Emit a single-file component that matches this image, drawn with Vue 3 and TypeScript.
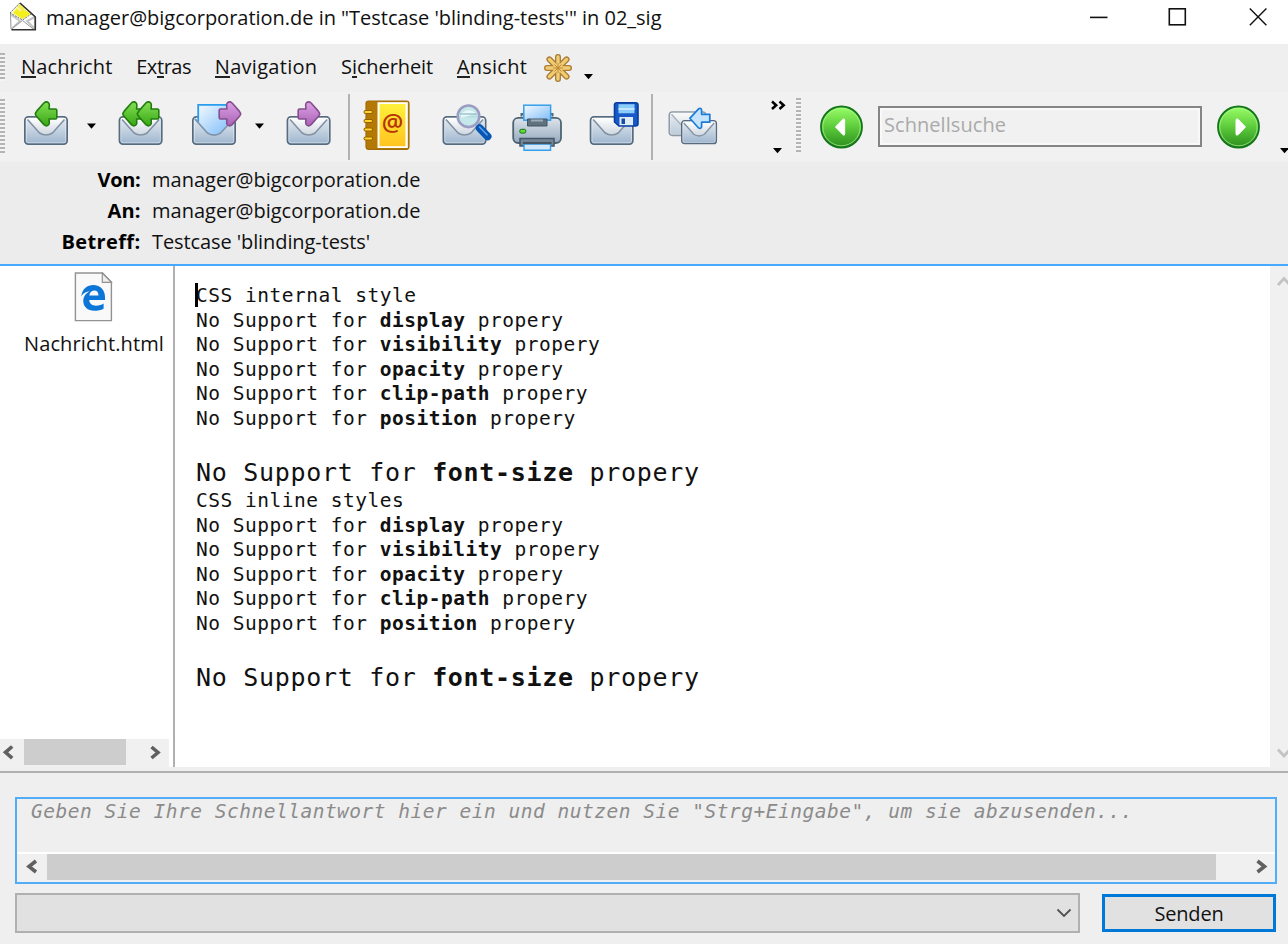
<script setup lang="ts">
import type { Directive } from 'vue'

interface MenuEntry { pre: string; key: string; post: string; width: number }
interface HeaderRow { label: string; labelWidth: number; value: string; width: number }
interface MessageLine { text: string; bold?: string; large?: boolean }

// Spreads or tightens a label so it takes exactly the given width.
const vFit: Directive<HTMLElement, number> = {
  mounted(el, binding) {
    const count = (el.textContent ?? '').length
    const natural = el.getBoundingClientRect().width
    if (count > 0) el.style.letterSpacing = `${(binding.value - natural) / count}px`
  },
}

const menu: MenuEntry[] = [
  { pre: '', key: 'N', post: 'achricht', width: 91.5 },
  { pre: 'Ex', key: 't', post: 'ras', width: 55 },
  { pre: '', key: 'N', post: 'avigation', width: 102.5 },
  { pre: 'S', key: 'i', post: 'cherheit', width: 92 },
  { pre: '', key: 'A', post: 'nsicht', width: 70.5 },
]

const headers: HeaderRow[] = [
  { label: 'Von:', labelWidth: 43, value: 'manager@bigcorporation.de', width: 268.5 },
  { label: 'An:', labelWidth: 33, value: 'manager@bigcorporation.de', width: 268.5 },
  { label: 'Betreff:', labelWidth: 79, value: "Testcase 'blinding-tests'", width: 218 },
]

const properties = ['display', 'visibility', 'opacity', 'clip-path', 'position']
const block = (title: string): MessageLine[] => [
  { text: title },
  ...properties.map((bold) => ({ text: 'No Support for ', bold })),
  { text: '\u00a0' },
  { text: 'No Support for ', bold: 'font-size', large: true },
]
const lines: MessageLine[] = [...block('CSS internal style'), ...block('CSS inline styles')]
</script>

<template>
  <div class="window">
    <svg class="defs" width="0" height="0" aria-hidden="true">
      <defs>
        <linearGradient id="gBody" x1="0" y1="0" x2="0" y2="1">
          <stop offset="0" stop-color="#e9edf2" /><stop offset="1" stop-color="#9db5ce" />
        </linearGradient>
        <linearGradient id="gFlap" x1="0" y1="0" x2="0" y2="1">
          <stop offset="0" stop-color="#fff" /><stop offset="1" stop-color="#ccd5de" />
        </linearGradient>
        <linearGradient id="gGreen" x1="0" y1="0" x2="0" y2="1">
          <stop offset="0" stop-color="#83e055" /><stop offset="1" stop-color="#38a714" />
        </linearGradient>
        <linearGradient id="gPurple" x1="0" y1="0" x2="0" y2="1">
          <stop offset="0" stop-color="#dda1e6" /><stop offset="1" stop-color="#a863b4" />
        </linearGradient>
        <linearGradient id="gBlue" x1="0" y1="0" x2="1" y2="1">
          <stop offset="0" stop-color="#f4faff" /><stop offset="1" stop-color="#7dbcf8" />
        </linearGradient>
        <linearGradient id="gOrb" x1="0" y1="0" x2="0" y2="1">
          <stop offset="0" stop-color="#9bff68" /><stop offset=".5" stop-color="#5ccb3b" /><stop offset="1" stop-color="#2b8d1d" />
        </linearGradient>
        <linearGradient id="gYellow" x1="0" y1="0" x2="0" y2="1">
          <stop offset="0" stop-color="#fff03a" /><stop offset="1" stop-color="#ffc420" />
        </linearGradient>
        <linearGradient id="gSilver" x1="0" y1="0" x2="0" y2="1">
          <stop offset="0" stop-color="#dfe5ec" /><stop offset="1" stop-color="#94a9be" />
        </linearGradient>
        <g id="envelope">
          <rect x=".9" y=".9" width="42.2" height="27.2" rx="3.4" fill="url(#gBody)" stroke="#566b7f" stroke-width="1.8" />
          <rect x="2.2" y="2.2" width="39.6" height="24.6" rx="2" fill="none" stroke="#fff" stroke-opacity=".5" stroke-width=".9" />
          <path d="M2 2 L15.5 17.4 Q22 21.5 28.5 17.4 L42 2Z" fill="url(#gFlap)" />
          <path d="M3.5 3.5 L15.5 17 Q22 21 28.5 17 L40.5 3.5" fill="none" stroke="#8191a2" stroke-width="1.6" />
        </g>
        <path id="arrowLeft" d="M.8 12.8 Q1 11.6 2.4 9.9 L9.4 2 Q12 -.3 14.2 2 Q15 3 14.8 4.6 L14.6 8 H21 Q22.3 8 22.3 9.3 V16.6 Q22.3 18 21 18 H14.6 L14.8 21.5 Q14.9 23.2 13.9 24 Q11.8 25.8 9.4 23.6 L2.4 15.8 Q1 14 .8 12.8Z" stroke-linejoin="round" stroke-width="1.6" />
        <path id="caret" d="M0 0H9L4.5 5.2Z" />
      </defs>
    </svg>

    <header class="titlebar">
      <svg class="app-icon" width="30" height="32" viewBox="0 0 30 32">
        <path d="M2.5 13 L13 3.5 L27 15 V28 H3Z" fill="#fff" stroke="#888" stroke-width=".9" />
        <path d="M3.5 14 L12 20 L3.5 28 M27 16 L19 20 L27 28" fill="none" stroke="#c4c4c4" stroke-width="2" />
        <path d="M2 12 L11.5 2.2 L24 12.5 L14.5 19Z" fill="#fbfbd8" stroke="#555" stroke-width=".9" stroke-dasharray="2 1" />
        <path d="M5 12 L9 7 L12 10.5 L15 7.5 L22.5 13 L14.5 18Z" fill="#f6ef1e" />
        <path d="M9 5.5 L12 3 L17 7.5 L13.5 10.5Z" fill="#f4ed5a" />
        <path d="M3 28.5 L14.5 19.5 L26 28.5" fill="#fff" stroke="#999" stroke-width="1" />
        <path d="M12 2 L27.3 16 V28.8 H3.5" fill="none" stroke="#333" stroke-width="1.6" />
      </svg>
      <span v-fit="615.5" class="title">manager@bigcorporation.de in "Testcase 'blinding-tests'" in 02_sig</span>
      <svg class="controls" width="200" height="44" viewBox="1088 0 200 44" fill="none" stroke="#111" stroke-width="1.6">
        <path d="M1090 17.4H1107.5" />
        <rect x="1169.3" y="8.8" width="16" height="16" />
        <path d="M1249.8 8.5L1266.4 25.2M1266.4 8.5L1249.8 25.2" stroke-width="1.4" />
      </svg>
    </header>

    <nav class="menubar">
      <span class="grip menu-grip"></span>
      <a v-for="m in menu" :key="m.key + m.post" v-fit="m.width" class="menu-item">{{ m.pre }}<span class="mnemonic">{{ m.key }}</span>{{ m.post }}</a>
      <svg class="star" width="56" height="36" viewBox="540 50 56 36">
        <g fill="none" stroke-linecap="round">
          <path d="M558 57V79M547 68H569M549.4 59.4L566.6 76.6M566.6 59.4L549.4 76.6" stroke="#ad7c35" stroke-width="6" />
          <path d="M558 57V79M547 68H569M549.4 59.4L566.6 76.6M566.6 59.4L549.4 76.6" stroke="#f0cd75" stroke-width="3.3" />
          <path d="M558 63.5V72.5M553.5 68H562.5M554.8 64.8L561.2 71.2M561.2 64.8L554.8 71.2" stroke="#bd8533" stroke-width="1" />
        </g>
        <use href="#caret" x="584" y="74" />
      </svg>
    </nav>

    <div class="toolbar">
      <span class="grip tool-grip"></span>
      <svg width="95" height="60" viewBox="10 96 95 60">
        <use href="#envelope" x="24" y="116" />
        <use href="#arrowLeft" x="34.5" y="101" fill="url(#gGreen)" stroke="#237c10" />
        <use href="#caret" x="87" y="123.5" />
      </svg>
      <svg width="75" height="60" viewBox="105 96 75 60">
        <use href="#envelope" x="118.6" y="116" />
        <use href="#arrowLeft" x="122" y="101" fill="url(#gGreen)" stroke="#237c10" />
        <use href="#arrowLeft" x="136.5" y="101" fill="url(#gGreen)" stroke="#237c10" />
      </svg>
      <svg width="95" height="60" viewBox="180 96 95 60">
        <use href="#envelope" x="192" y="116" />
        <path d="M198 104.8 H230 V124 L218 134.5 H210 L198 122Z" fill="url(#gBlue)" />
        <path d="M198.2 122 V104.8 H229" fill="none" stroke="#289cef" stroke-width="1.8" />
        <path d="M194.5 118.5 L207 132.5 Q214 137.5 221 132.5 L234 118.5" fill="none" stroke="#7f96ae" stroke-width="1.4" />
        <g transform="translate(241.5 101) scale(-1 1)"><use href="#arrowLeft" fill="url(#gPurple)" stroke="#854e8d" /></g>
        <use href="#caret" x="255" y="123.5" />
      </svg>
      <svg width="73" height="60" viewBox="275 96 73 60">
        <use href="#envelope" x="286.6" y="116" />
        <g transform="translate(320.5 101) scale(-1 1)"><use href="#arrowLeft" fill="url(#gPurple)" stroke="#854e8d" /></g>
      </svg>
      <span class="separator"></span>
      <svg width="75" height="60" viewBox="350 96 75 60">
        <rect x="366" y="101" width="43" height="48.3" rx="2.5" fill="#b47905" stroke="#a06c08" stroke-width="1.2" />
        <rect x="377.5" y="102.2" width="30.3" height="45.8" fill="#fff" />
        <rect x="379.5" y="104" width="26" height="42.2" fill="url(#gYellow)" />
        <g stroke-linecap="round">
          <path d="M365.5 112H371M365.5 121H371M365.5 129.5H371M365.5 138.5H371" stroke="#996200" stroke-width="4" />
          <path d="M365.5 112H371M365.5 121H371M365.5 129.5H371M365.5 138.5H371" stroke="#ffd52c" stroke-width="2" />
        </g>
        <text x="392.6" y="130.5" text-anchor="middle" font-family="Open Sans, sans-serif" font-size="24" font-weight="600" fill="#b53307">@</text>
      </svg>
      <svg width="75" height="60" viewBox="425 96 75 60">
        <use href="#envelope" x="442.5" y="116" />
        <path d="M479.5 128 L487.7 136.5" stroke="#0856b3" stroke-width="7.6" stroke-linecap="round" />
        <path d="M479.5 127 L487 134.8" stroke="#5fa5ed" stroke-width="1.6" stroke-linecap="round" />
        <circle cx="468.5" cy="116.3" r="10.8" fill="#c1e6ea" fill-opacity=".93" stroke="#9b9dc2" stroke-width="2.6" />
        <path d="M461 114 Q468 107 476 113 Q469 116 461 118Z" fill="#fff" opacity=".65" />
        <path d="M460 114H477" stroke="#8ab9c0" stroke-width="1.2" />
      </svg>
      <svg width="75" height="60" viewBox="500 96 75 60">
        <rect x="513.2" y="117.8" width="47.8" height="25.2" rx="5" fill="url(#gSilver)" stroke="#4f6472" stroke-width="1.8" />
        <path d="M521.5 116.5V114H527M552.5 116.5V114H547" fill="none" stroke="#526777" stroke-width="2" />
        <rect x="523.8" y="105.2" width="26.8" height="15" fill="url(#gBlue)" stroke="#359fe9" stroke-width="1.5" />
        <path d="M527.5 119H547V126H527.5Z" fill="#61727f" stroke="#435564" />
        <path d="M531 120.5H543" stroke="#9eadba" stroke-width="2" />
        <rect x="519.8" y="129.3" width="6" height="3.8" rx="1.5" fill="#61df35" stroke="#117311" />
        <path d="M520 138.5H554V146H520Z" fill="#738695" stroke="#435768" stroke-width="1.5" />
        <path d="M524 144H550.5V150.3H524Z" fill="#d4e8fa" stroke="#359fe9" stroke-width="1.4" />
        <path d="M523 143H551.5" stroke="#425563" stroke-width="2.2" />
      </svg>
      <svg width="76" height="60" viewBox="575 96 76 60">
        <use href="#envelope" x="589.7" y="116" />
        <path d="M614.5 105 Q614.5 102.8 617 102.8 H635.5 Q638 102.8 638 105.3 V123.5 Q638 126 635.5 126 H619 L614.5 122Z" fill="#1959c7" stroke="#073e9f" stroke-width="1.6" />
        <path d="M618.5 104.2H634.5V113.3H618.5Z" fill="#8acdfb" />
        <path d="M618.5 109H634.5" stroke="#d3edff" stroke-width="1.5" />
        <path d="M619.5 117H633V125.2H619.5Z" fill="#e1edf6" />
        <path d="M621.5 118.5H625V124H621.5Z" fill="#164ca7" />
      </svg>
      <span class="separator"></span>
      <svg width="143" height="60" viewBox="653 96 143 60">
        <g transform="translate(668.5 111.2) scale(.86)" opacity=".65"><use href="#envelope" /></g>
        <g transform="translate(681 120) scale(.82 .84)"><use href="#envelope" /></g>
        <path d="M689.8 118.3 L698.6 108.8 Q701.4 107.5 701.6 110.3 V114.3 H709.8 V122.2 H701.6 V126.8 Q701 129 698.6 128Z" fill="#c6e4ff" stroke="#1d7bd8" stroke-width="1.7" stroke-linejoin="round" />
        <path d="M772 101.5L776.2 105.2L772 109M779.5 101.5L783.7 105.2L779.5 109" fill="none" stroke="#000" stroke-width="2.5" />
        <use href="#caret" x="773" y="148" />
      </svg>
      <span class="grip search-grip"></span>
      <svg width="77" height="60" viewBox="801 96 77 60">
        <circle cx="841.5" cy="127" r="20.5" fill="url(#gOrb)" stroke="#137719" stroke-width="1.8" />
        <circle cx="841.5" cy="127" r="18.7" fill="none" stroke="#b5f49e" stroke-width=".9" opacity=".75" />
        <path d="M835.5 127L843 119.2Q844.7 118 844.7 120.5V133.8Q844.7 136 843 134.8Z" fill="#fff" stroke="#fff" />
      </svg>
      <div class="search"><span v-fit="122">Schnellsuche</span></div>
      <svg width="86" height="60" viewBox="1202 96 86 60">
        <circle cx="1238.5" cy="127" r="20.5" fill="url(#gOrb)" stroke="#137719" stroke-width="1.8" />
        <circle cx="1238.5" cy="127" r="18.7" fill="none" stroke="#b5f49e" stroke-width=".9" opacity=".75" />
        <path d="M1245.5 127L1238 119.2Q1236 118 1236 120.5V133.8Q1236 136 1238 134.8Z" fill="#fff" stroke="#fff" />
        <use href="#caret" x="1280" y="148" />
      </svg>
    </div>

    <section class="headers">
      <div v-for="h in headers" :key="h.label" class="header-row">
        <div class="header-label"><b v-fit="h.labelWidth">{{ h.label }}</b></div>
        <span v-fit="h.width">{{ h.value }}</span>
      </div>
    </section>

    <main class="content">
      <aside class="attachments">
        <div class="file">
          <svg width="40" height="52" viewBox="74 271 40 52">
            <path d="M75.4 273H102.5L111.4 282V320.6H75.4Z" fill="#f9f9f9" stroke="#929292" stroke-width="1.4" />
            <path d="M102.3 273V282.4H111.4Z" fill="#ededed" stroke="#929292" stroke-width="1.2" />
            <path d="M81.2 296.5C82.3 288.5 87.5 285 93.2 285C100.5 285 105 290 105 297V300H89.2C89.5 304 92.3 305.7 96 305.7C99.2 305.7 101.6 304.8 103.6 303.5V308.7C101 310.2 97.5 310.8 94.4 310.8C87.5 310.8 83.3 306.7 83.3 301C83.3 296.8 85.7 293.3 90 291.3C86 291.5 83 293.3 81.2 296.5ZM89.3 295.6H98.5C98.5 292.3 97 290.4 94.2 290.4C91.4 290.4 89.7 292.6 89.3 295.6Z" fill="#0b75d8" fill-rule="evenodd" />
          </svg>
          <span v-fit="140" class="file-name">Nachricht.html</span>
        </div>
        <div class="hscroll side-scroll">
          <svg width="24" height="27" viewBox="0 0 24 27"><path d="M13.7 7.5L7 13.3L13.7 19.2" /></svg>
          <span class="thumb"></span>
          <svg width="43" height="27" viewBox="126 739 43 27"><path d="M151.5 747L158 752.5L151.5 758" /></svg>
        </div>
      </aside>

      <article class="message">
        <div v-for="(line, i) in lines" :key="i" :class="['line', { large: line.large }]"><span v-if="i === 0" class="cursor"></span>{{ line.text }}<template v-if="line.bold"><b>{{ line.bold }}</b> propery</template></div>
      </article>

      <div class="vscroll">
        <svg width="18" height="30" viewBox="1270 266 18 30"><path d="M1278 285L1284 278.5L1290 285" /></svg>
        <svg width="18" height="30" viewBox="1270 737 18 30"><path d="M1278 749.5L1284 756L1290 749.5" /></svg>
      </div>
    </main>

    <footer class="reply">
      <div class="quick">
        <div class="placeholder"><span>Geben Sie Ihre Schnellantwort hier ein und nutzen Sie "Strg+Eingabe", um sie abzusenden...</span></div>
        <div class="hscroll quick-scroll">
          <svg width="30" height="27" viewBox="17 854 30 27"><path d="M36 861L29 866.5L36 872" /></svg>
          <span class="thumb"></span>
          <svg width="59" height="27" viewBox="1216 854 59 27"><path d="M1257.5 861L1264.5 866.5L1257.5 872" /></svg>
        </div>
      </div>
      <div class="actions">
        <div class="combo">
          <svg width="18" height="12" viewBox="0 0 18 12"><path d="M2.5 2.5L9 9L15.5 2.5" fill="none" stroke="#505050" stroke-width="1.8" /></svg>
        </div>
        <button class="send"><span v-fit="69">Senden</span></button>
      </div>
    </footer>
  </div>
</template>

<style>
body { margin: 0; overflow: hidden; }
</style>

<style scoped>
* { box-sizing: border-box; }
.window {
  width: 1288px; height: 944px; overflow: hidden; display: flex; flex-direction: column;
  background: #efefef; color: #111; white-space: nowrap;
  font: 20px/28px "Open Sans", "Noto Sans", sans-serif;
}
svg { display: block; flex: none; }
.defs { position: absolute; }
.titlebar { height: 44px; flex: none; display: flex; background: #fff; }
.app-icon { margin: 1px 8px 0 8px; }
.title { margin-top: 4px; }
.controls { margin-left: auto; }
.menubar { height: 48px; flex: none; display: flex; align-items: flex-start; background: #efefef; }
.grip { flex: none; width: 5px; background: repeating-linear-gradient(#b4b4b4 0 1.6px, #f4f4f4 1.6px 4px); }
.menu-grip { height: 28px; margin: 9px 16px 0 0; }
.menu-item { margin: 9px 23.7px 0 0; }
.mnemonic { display: inline-block; height: 25px; line-height: 28px; border-bottom: 2px solid #222; vertical-align: top; }
.star { margin: 6px 0 0 -10.5px; }
.toolbar { height: 71px; flex: none; display: flex; align-items: flex-start; padding-top: 4px; background: #f1f1f1; border-bottom: 2px solid #eee; }
.tool-grip { height: 55px; margin: 3px 5px 0 0; }
.search-grip { height: 55px; margin-top: 2px; }
.separator { width: 2px; height: 66px; margin-top: -2px; flex: none; background: #b2b2b2; }
.search { width: 324px; height: 41px; margin-top: 10px; padding: 3px 4px; border: 2px solid #858585; box-shadow: inset 0 0 0 2px #f9f9f9; color: #aaa; }
.headers { height: 101px; flex: none; background: #ececec; padding-top: .6px; }
.header-row { height: 31.2px; line-height: 31.2px; display: flex; }
.header-label { width: 140.5px; margin-right: 11.5px; text-align: right; color: #000; }
.content { height: 503px; flex: none; display: flex; border-top: 2px solid #48aaff; background: #fff; }
.attachments { width: 175px; display: flex; flex-direction: column; border-right: 2px solid #b0b0b0; }
.file { flex: 1; display: flex; flex-direction: column; align-items: flex-start; padding-top: 5px; }
.file svg { margin-left: 74px; }
.file-name { margin: 7px 0 0 24px; }
.hscroll { display: flex; background: #f0f0f0; fill: none; stroke: #606060; stroke-width: 3.6; }
.side-scroll { width: 169px; height: 28px; }
.side-scroll svg:first-child { transform: translateX(-1.5px); }
.side-scroll .thumb { width: 102px; height: 26px; background: #cdcdcd; }
.message { flex: 1; padding: 18px 0 0 21px; font: 19.5px/24.55px "DejaVu Sans Mono", monospace; letter-spacing: .51px; white-space: pre; }
.line { height: 24.55px; position: relative; }
.large { height: 33.4px; line-height: 34px; font-size: 25px; letter-spacing: .69px; }
.cursor { position: absolute; left: -1px; top: -1px; width: 3px; height: 24px; background: #000; }
.vscroll { width: 18px; display: flex; flex-direction: column; justify-content: space-between; background: #f0f0f0; fill: none; stroke: #c3c3c3; stroke-width: 2.8; }
.reply { flex: 1; border-top: 1px solid transparent; padding: 0 11px 0 15px; display: flex; flex-direction: column; background: linear-gradient(#efefef 0 3px, #afafaf 3px 5px, #efefef 5px); }
.quick { height: 87px; margin-top: 29px; border: 2px solid #51adf8; display: flex; flex-direction: column; background: #efefef; }
.placeholder { height: 53px; padding-left: 14px; font: italic 19.5px/25px "DejaVu Sans Mono", monospace; letter-spacing: .505px; color: #8b8b8b; }
.quick-scroll { height: 30px; border-top: 2px solid #fff; }
.quick-scroll .thumb { width: 1169px; height: 26px; background: #cdcdcd; }
.actions { display: flex; align-items: center; justify-content: space-between; margin-top: 9px; }
.combo { width: 1065px; height: 40px; border: 2px solid #b0b0b0; background: #e1e1e1; display: flex; justify-content: flex-end; align-items: center; padding-right: 5px; }
.send { width: 174px; height: 38px; margin-right: 1px; padding: 2px 0 0; border: 3px solid #0078d7; background: #e1e1e1; color: #111; font: inherit; line-height: 28px; }
</style>
